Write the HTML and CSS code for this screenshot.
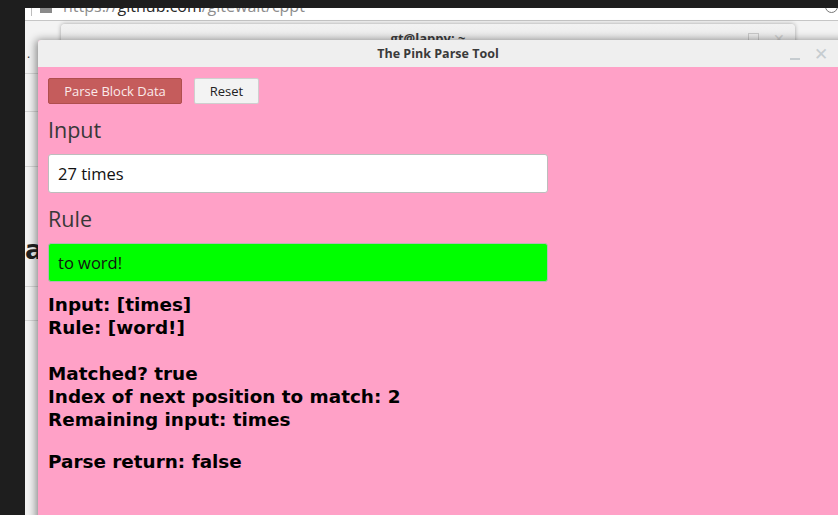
FILE: index.html
```html
<!DOCTYPE html>
<html>
<head>
<meta charset="utf-8">
<title>The Pink Parse Tool</title>
<link rel="stylesheet" href="styles.css">
</head>
<body>
<div class="desktop">
  <div class="browser">
    <div class="urlbar">
      <span class="sep"></span>
      <span class="favicon"></span>
      <span class="url">https://<span class="host">github.com</span>/gitewalt/cppt</span>
      <span class="info"></span>
    </div>
    <div class="page">
      <div class="rule-line l1"></div>
      <div class="rule-line l2"></div>
      <div class="rule-line l3"></div>
      <div class="rule-line l4"></div>
      <div class="rule-line l5"></div>
      <div class="rule-line l6"></div>
      <span class="dot">.</span>
      <span class="bigm">M</span>
      <span class="biga">a</span>
      <span class="doc">iiDoc Sy</span>
    </div>
  </div>

  <div class="terminal">
    <div class="term-title">
      <span class="term-name">gt@lappy: ~</span>
      <span class="term-ctrls"><span class="sq"></span><span class="tx">✕</span></span>
    </div>
  </div>

  <div class="app-window">
    <div class="titlebar">
      <span class="title">The Pink Parse Tool</span>
      <span class="win-ctrls"><span class="min"></span><span class="close">✕</span></span>
    </div>
    <div class="app-body">
      <div class="toolbar">
        <button class="btn btn-parse">Parse Block Data</button>
        <button class="btn btn-reset">Reset</button>
      </div>
      <div class="field-label">Input</div>
      <div class="field field-input">27 times</div>
      <div class="field-label">Rule</div>
      <div class="field field-rule">to word!</div>
      <div class="output">
        <div class="out-line">Input: [times]</div>
        <div class="out-line">Rule: [word!]</div>
        <div class="out-line blank">&nbsp;</div>
        <div class="out-line">Matched? true</div>
        <div class="out-line">Index of next position to match: 2</div>
        <div class="out-line">Remaining input: times</div>
        <div class="out-line parse-ret">Parse return: false</div>
      </div>
    </div>
  </div>
</div>
</body>
</html>
```

FILE: styles.css
```css
html, body {
  margin: 0;
  padding: 0;
}
body {
  width: 838px;
  height: 515px;
  overflow: hidden;
  background: #1e1e1e;
  font-family: "Open Sans", "Noto Sans", sans-serif;
}
.desktop {
  position: relative;
  width: 838px;
  height: 515px;
  overflow: hidden;
}

/* browser behind */
.browser {
  position: absolute;
  left: 25px;
  top: 8px;
  right: 0;
  bottom: 0;
  background: #f3f3f3;
  overflow: hidden;
}
.urlbar {
  position: relative;
  height: 12px;
  background: #ffffff;
  border-bottom: 1px solid #c6c6c6;
  overflow: hidden;
}
.urlbar .sep {
  position: absolute;
  left: 6px;
  top: 0;
  width: 1px;
  height: 8px;
  background: #bdbdbd;
}
.urlbar .favicon {
  position: absolute;
  left: 15px;
  top: 0;
  width: 12px;
  height: 5px;
  background: #8a8a8a;
}
.urlbar .url {
  position: absolute;
  left: 38px;
  top: -12px;
  font-family: "Open Sans", sans-serif;
  font-size: 16px;
  line-height: 20px;
  color: #8d8d8d;
  white-space: nowrap;
}
.urlbar .host {
  color: #2a2a2a;
}
.urlbar .info {
  position: absolute;
  left: 800px;
  top: -8px;
  width: 11px;
  height: 11px;
  border: 1.5px solid #777;
  border-radius: 50%;
}
.page {
  position: relative;
  height: 100%;
}
.rule-line {
  position: absolute;
  left: 0;
  width: 40px;
  height: 1px;
  background: #d6d6d6;
}
.l1 { top: 52px; }
.l2 { top: 90px; }
.l3 { top: 145px; }
.l4 { top: 265px; }
.l5 { top: 299px; }
.l6 { top: 503px; }
.dot {
  position: absolute;
  left: 2px;
  top: 26px;
  font-size: 12px;
  line-height: 14px;
  color: #333;
}
.bigm {
  position: absolute;
  left: 17px;
  top: 18px;
  font-family: "DejaVu Sans", sans-serif;
  font-weight: bold;
  font-size: 22px;
  line-height: 26px;
  color: #2b2b2b;
}
.biga {
  position: absolute;
  left: 0;
  top: 213px;
  font-family: "DejaVu Sans", sans-serif;
  font-weight: bold;
  font-size: 27px;
  line-height: 32px;
  color: #222;
}
.doc {
  position: absolute;
  left: 772px;
  top: 25px;
  font-family: "Open Sans", sans-serif;
  font-size: 14px;
  line-height: 16px;
  color: #222;
  white-space: nowrap;
}

/* terminal behind */
.terminal {
  position: absolute;
  left: 61px;
  top: 24px;
  width: 734px;
  height: 300px;
  background: #ececec;
  border-radius: 4px 4px 0 0;
  box-shadow: 0 0 4px rgba(0,0,0,0.35);
}
.term-title {
  position: relative;
  height: 26px;
  background: linear-gradient(#f2f2f2, #e6e6e6);
  border-radius: 4px 4px 0 0;
  text-align: center;
}
.term-name {
  display: inline-block;
  padding-top: 5px;
  font-weight: bold;
  font-size: 13px;
  color: #3c3c3c;
}
.term-ctrls {
  position: absolute;
  right: 10px;
  top: 5px;
  display: flex;
  gap: 14px;
  align-items: center;
}
.term-ctrls .sq {
  width: 9px;
  height: 9px;
  border: 1px solid #c9c9c9;
}
.term-ctrls .tx {
  font-size: 14px;
  color: #cfcfcf;
}

/* front app window */
.app-window {
  position: absolute;
  left: 38px;
  top: 40px;
  width: 820px;
  height: 490px;
  background: #ffa1c7;
  box-shadow: -2px 0 8px rgba(0,0,0,0.45);
  border-radius: 3px 3px 0 0;
}
.titlebar {
  position: relative;
  height: 27px;
  background: #efefef;
  border-radius: 3px 3px 0 0;
  display: flex;
  align-items: center;
  justify-content: center;
  padding-right: 20px;
}
.title {
  font-family: "Open Sans", sans-serif;
  font-weight: bold;
  font-size: 12.5px;
  color: #3a3a3a;
}
.win-ctrls {
  position: absolute;
  left: 752px;
  top: 4px;
  display: flex;
  align-items: center;
  gap: 14px;
}
.win-ctrls .min {
  margin-top: 10px;
  width: 10px;
  height: 1.5px;
  background: #c6ccd0;
}
.win-ctrls .close {
  font-size: 17px;
  line-height: 20px;
  color: #c6ccd0;
}

.app-body {
  padding: 11px 10px 0 10px;
}
.toolbar {
  display: flex;
  gap: 12px;
}
.btn {
  height: 26px;
  font-family: "Open Sans", sans-serif;
  font-size: 13px;
  border-radius: 2px;
  padding: 0;
}
.btn-parse {
  width: 134px;
  background: #c55c5c;
  border: 1px solid #b04e4e;
  color: #fbeaea;
}
.btn-reset {
  width: 65px;
  background: #f3f3f3;
  border: 1px solid #cfcfcf;
  color: #222;
}
.field-label {
  margin-top: 12px;
  font-family: "Open Sans", sans-serif;
  font-size: 21.5px;
  line-height: 28px;
  color: #383838;
}
.field {
  box-sizing: border-box;
  margin-top: 10px;
  width: 500px;
  height: 39px;
  border: 1px solid #bdbdbd;
  border-radius: 3px;
  padding: 0 9px;
  display: flex;
  align-items: center;
  font-family: "Open Sans", sans-serif;
  font-size: 16.5px;
  color: #111;
}
.field-input {
  background: #ffffff;
}
.field-rule {
  background: #00ff00;
  border-color: #b5b5b5;
}
.output {
  margin-top: 11px;
  font-family: "DejaVu Sans", sans-serif;
  font-weight: bold;
  font-size: 18.4px;
  line-height: 23px;
  color: #000;
}
.out-line {
  white-space: nowrap;
}
.parse-ret {
  margin-top: 19px;
}
```
